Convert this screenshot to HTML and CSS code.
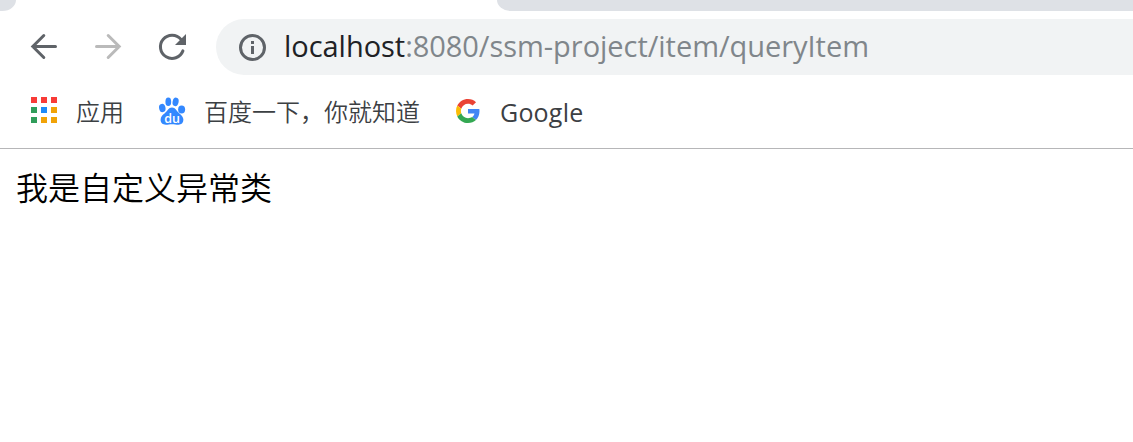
FILE: index.html
```html
<!DOCTYPE html>
<html lang="zh-CN">
<head>
<meta charset="utf-8">
<title>queryItem</title>
<link rel="stylesheet" href="styles.css">
</head>
<body>
<header class="browser">
  <div class="tabstrip"><span class="tab-left"></span><span class="tab-right"></span></div>
  <nav class="toolbar">
    <svg class="nav-icon" viewBox="0 0 32 32"><path d="M27.5 15.5H5M15.8 4.5L4.8 15.5L15.8 26.5"/></svg>
    <svg class="nav-icon disabled" viewBox="0 0 32 32"><path d="M4.5 15.5H27M16.2 4.5L27.2 15.5L16.2 26.5"/></svg>
    <svg class="nav-icon" viewBox="0 0 32 32"><path d="M26.9 19.9A11.6 11.6 0 1 1 25 8.4"/><path class="solid" d="M30 3V14H19Z"/></svg>
    <div class="omnibox">
      <svg class="info" viewBox="0 0 28 28"><circle cx="14.5" cy="14.5" r="12"/><path d="M14.5 13V21M14.5 8V11"/></svg>
      <div class="url"><span class="host">localhost</span><span class="path">:8080/ssm-project/item/queryItem</span></div>
    </div>
  </nav>
  <div class="bookmarks">
    <div class="bookmark apps">
      <span class="apps-grid"><i class="red"></i><i class="red"></i><i class="red"></i><i class="green"></i><i class="blue"></i><i class="yellow"></i><i class="green"></i><i class="yellow"></i><i class="yellow"></i></span>
      <span class="label">应用</span>
    </div>
    <div class="bookmark baidu">
      <svg class="paw" viewBox="0 0 28 30"><g><ellipse cx="4.3" cy="12" rx="3.2" ry="4.2" transform="rotate(-12 4.3 12)"/><ellipse cx="10.3" cy="5.7" rx="2.9" ry="4.3"/><ellipse cx="17.6" cy="5.9" rx="3" ry="4.3" transform="rotate(12 17.6 5.9)"/><ellipse cx="23.6" cy="13.6" rx="3.5" ry="4"/><path d="M14 11.5C10.5 11.5 9.5 15 6.8 17.2C4.5 19 2.6 20.8 2.6 23.8C2.6 27 4.8 28.7 7.8 28.7C10 28.7 11.7 28.2 14 28.2C16.3 28.2 18.2 28.7 20.4 28.7C23.4 28.7 25.4 27 25.4 23.8C25.4 21 23.5 19.2 21.2 17.2C18.5 15 17.5 11.5 14 11.5Z"/></g><text x="6.2" y="26.5">du</text></svg>
      <span class="label">百度一下，你就知道</span>
    </div>
    <div class="bookmark google">
      <svg class="g-logo" viewBox="0 0 48 48"><path fill="#ea4335" d="M24 9.5c3.54 0 6.71 1.22 9.21 3.6l6.85-6.85C35.9 2.38 30.47 0 24 0 14.62 0 6.51 5.38 2.56 13.22l7.98 6.19C12.43 13.72 17.74 9.5 24 9.5z"/><path fill="#4285f4" d="M46.98 24.55c0-1.57-.15-3.09-.38-4.55H24v9.02h12.94c-.58 2.96-2.26 5.48-4.78 7.18l7.73 6c4.51-4.18 7.09-10.36 7.09-17.65z"/><path fill="#fbbc05" d="M10.53 28.59c-.48-1.45-.76-2.99-.76-4.59s.27-3.14.76-4.59l-7.98-6.19C.92 16.46 0 20.12 0 24c0 3.88.92 7.54 2.56 10.78l7.97-6.19z"/><path fill="#34a853" d="M24 48c6.48 0 11.93-2.13 15.89-5.81l-7.73-6c-2.15 1.45-4.92 2.3-8.16 2.3-6.26 0-11.57-4.22-13.47-9.91l-7.98 6.19C6.51 42.62 14.62 48 24 48z"/></svg>
      <span class="label latin">Google</span>
    </div>
  </div>
</header>
<main class="page">我是自定义异常类</main>
</body>
</html>
```
FILE: styles.css
```css
* { box-sizing: border-box; }
body { margin: 0; background: #fff; font-family: "Open Sans", "Noto Sans CJK SC", sans-serif; overflow: hidden; }
.browser { height: 149px; border-bottom: 1px solid #b6b6b8; }
.tabstrip { height: 11px; display: flex; justify-content: space-between; }
.tab-left { width: 16px; background: #dee1e6; border-bottom-right-radius: 16px 13px; }
.tab-right { width: 636px; background: #dee1e6; border-bottom-left-radius: 16px 13px; }
.toolbar { display: flex; align-items: center; height: 72px; padding-left: 28px; gap: 32px; }
.nav-icon { width: 32px; height: 32px; flex: none; fill: none; stroke: #5f6368; stroke-width: 3; stroke-linecap: round; }
.nav-icon.disabled { stroke: #bababa; }
.nav-icon .solid { fill: #5f6368; stroke: none; }
.omnibox { flex: 1; height: 56px; margin-left: -4px; border-radius: 28px 0 0 28px; background: #f1f3f4; display: flex; align-items: center; padding-left: 22px; gap: 18px; }
.info { width: 28px; height: 28px; fill: none; stroke: #5f6368; stroke-width: 3; }
.url { font-size: 29px; line-height: 40px; padding-bottom: 2px; letter-spacing: -0.04px; white-space: nowrap; color: #80868b; }
.host { color: #202124; }
.bookmarks { display: flex; height: 56px; padding-left: 31px; align-items: center; color: #3c4043; }
.bookmark { display: flex; align-items: center; }
.label { font-family: "Noto Sans CJK SC", sans-serif; font-size: 24px; font-weight: 350; line-height: 34px; white-space: nowrap; }
.apps { gap: 19px; }
.apps-grid { display: grid; grid-template-columns: repeat(3, 6px); gap: 4px; margin-bottom: 2px; }
.apps-grid i { height: 6px; }
.red { background: #f83b37; }
.green { background: #309d5a; }
.blue { background: #1d8af8; }
.yellow { background: #f1a307; }
.baidu { margin-left: 34px; gap: 18px; }
.paw { width: 28px; height: 30px; fill: #3388ff; }
.paw text { fill: #fff; font: 600 12.5px "Open Sans", sans-serif; }
.google { margin-left: 36px; gap: 20px; }
.g-logo { width: 24px; height: 24px; }
.latin { font-family: "Open Sans", sans-serif; font-size: 25px; font-weight: 400; letter-spacing: 0.2px; padding-top: 1px; }
.page { padding: 13px 16px; font: 350 32px/48px "Noto Sans CJK SC", sans-serif; color: #000; }
```
